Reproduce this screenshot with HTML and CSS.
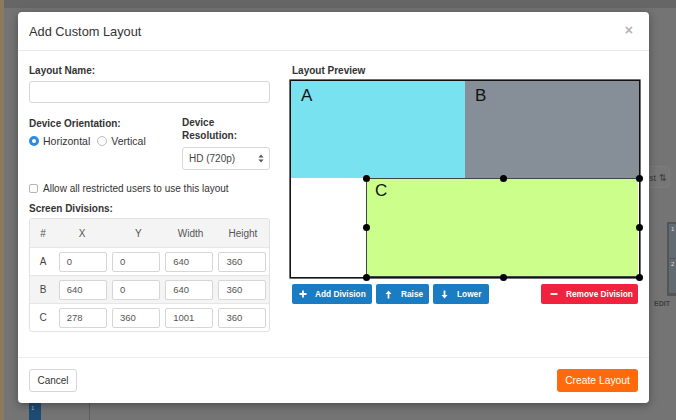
FILE: index.html
```html
<!DOCTYPE html>
<html>
<head>
<meta charset="utf-8">
<link rel="stylesheet" href="styles.css">
</head>
<body>
<div class="backdrop">
  <div class="bg-edge"></div>
  <div class="bg-sort">st <span class="sort-ic">⇅</span></div>
  <div class="bg-card"><span>1</span><span>2</span></div>
  <div class="bg-edit">EDIT</div>
  <div class="bg-tile">1</div>
  <div class="bg-bar"></div>
</div>
<div class="modal">
  <div class="modal-header">
    <h1 class="modal-title">Add Custom Layout</h1>
    <span class="close">×</span>
  </div>
  <div class="modal-body">
    <div class="col-left">
      <label class="lbl">Layout Name:</label>
      <input class="txt" type="text">
      <div class="device-row">
        <div class="orient">
          <label class="lbl">Device Orientation:</label>
          <div class="radios">
            <span class="radio on"></span><span class="rtext">Horizontal</span>
            <span class="radio"></span><span class="rtext">Vertical</span>
          </div>
        </div>
        <div class="resol">
          <label class="lbl lbl2">Device<br>Resolution:</label>
          <div class="select">HD (720p)<span class="arrows"><svg width="6" height="9" viewBox="0 0 6 9"><path d="M3 0.5 L5.5 3.5 H0.5 Z M3 8.5 L5.5 5.5 H0.5 Z" fill="#555"/></svg></span></div>
        </div>
      </div>
      <div class="check-row"><span class="check"></span>Allow all restricted users to use this layout</div>
      <label class="lbl sd">Screen Divisions:</label>
      <div class="tbl">
        <div class="tr th"><span class="c0">#</span><span class="c">X</span><span class="c">Y</span><span class="c">Width</span><span class="c">Height</span></div>
        <div class="tr"><span class="c0">A</span><span class="c"><i class="cell">0</i></span><span class="c"><i class="cell">0</i></span><span class="c"><i class="cell">640</i></span><span class="c"><i class="cell">360</i></span></div>
        <div class="tr alt"><span class="c0">B</span><span class="c"><i class="cell">640</i></span><span class="c"><i class="cell">0</i></span><span class="c"><i class="cell">640</i></span><span class="c"><i class="cell">360</i></span></div>
        <div class="tr last"><span class="c0">C</span><span class="c"><i class="cell">278</i></span><span class="c"><i class="cell">360</i></span><span class="c"><i class="cell">1001</i></span><span class="c"><i class="cell">360</i></span></div>
      </div>
    </div>
    <div class="col-right">
      <label class="lbl pl">Layout Preview</label>
      <div class="preview">
        <div class="div div-a" style="left:0;top:0;width:174px;height:97px"><span>A</span></div>
        <div class="div div-b" style="left:174px;top:0;width:174px;height:97px"><span>B</span></div>
        <div class="div div-c" style="left:75px;top:97px;width:272px;height:99px"><span>C</span></div>
        <i class="h" style="left:75px;top:97px"></i>
        <i class="h" style="left:212px;top:97px"></i>
        <i class="h" style="left:348px;top:97px"></i>
        <i class="h" style="left:75px;top:146px"></i>
        <i class="h" style="left:348px;top:146px"></i>
        <i class="h" style="left:75px;top:196px"></i>
        <i class="h" style="left:212px;top:196px"></i>
        <i class="h" style="left:348px;top:196px"></i>
      </div>
      <div class="btn-row">
        <span class="btn blue add"><svg width="8" height="8" viewBox="0 0 8 8"><path d="M4 0.5 V7.5 M0.5 4 H7.5" stroke="#fff" stroke-width="1.8"/></svg>Add Division</span>
        <span class="btn blue raise"><svg width="7" height="9" viewBox="0 0 7 9"><path d="M3.5 0.5 L6.5 4 H4.4 V8.5 H2.6 V4 H0.5 Z" fill="#fff"/></svg>Raise</span>
        <span class="btn blue lower"><svg width="7" height="9" viewBox="0 0 7 9"><path d="M3.5 8.5 L6.5 5 H4.4 V0.5 H2.6 V5 H0.5 Z" fill="#fff"/></svg>Lower</span>
        <span class="spacer"></span>
        <span class="btn red"><svg width="8" height="8" viewBox="0 0 8 8"><path d="M0.5 4 H7.5" stroke="#fff" stroke-width="1.8"/></svg>Remove Division</span>
      </div>
    </div>
  </div>
  <div class="modal-footer">
    <span class="btn-cancel">Cancel</span>
    <span class="btn-create">Create Layout</span>
  </div>
</div>
</body>
</html>
```

FILE: styles.css
```css
html, body {
  margin: 0;
  padding: 0;
}
body {
  width: 676px;
  height: 420px;
  overflow: hidden;
  background: #727272;
  font-family: "Liberation Sans", Arial, sans-serif;
  color: #333;
  position: relative;
}
.backdrop {
  position: absolute;
  inset: 0;
  background: linear-gradient(#666 0, #666 8px, #747474 8px);
}
.bg-edge {
  position: absolute;
  left: 0;
  top: 0;
  width: 4px;
  height: 420px;
  background: #8a7a5e;
}
.bg-sort {
  position: absolute;
  left: 640px;
  top: 166px;
  width: 30px;
  height: 22px;
  border: 1px solid #7c7c7c;
  border-radius: 3px;
  background: #777;
  font-size: 9px;
  line-height: 22px;
  color: #3a3a3a;
  padding-left: 8px;
  box-sizing: border-box;
}
.sort-ic { font-size: 9px; }
.bg-card {
  position: absolute;
  left: 667px;
  top: 222px;
  width: 12px;
  height: 70px;
  border: 2px solid #555;
  background: #626a72;
  font-size: 6px;
  color: #ddd;
}
.bg-card span { display: block; padding: 2px; height: 30px; border-bottom: 1px solid #555; }
.bg-edit {
  position: absolute;
  left: 654px;
  top: 300px;
  font-size: 7px;
  font-weight: bold;
  color: #3e3e3e;
}
.bg-tile {
  position: absolute;
  left: 29px;
  top: 403px;
  width: 12px;
  height: 17px;
  background: #1d4b73;
  color: #aac;
  font-size: 6px;
  padding: 2px;
  box-sizing: border-box;
}
.bg-bar {
  position: absolute;
  left: 89px;
  top: 403px;
  width: 1px;
  height: 17px;
  background: #5e5e5e;
}

.modal {
  position: absolute;
  left: 18px;
  top: 12px;
  width: 631px;
  height: 391px;
  background: #fff;
  border-radius: 4px;
  box-shadow: 0 2px 8px rgba(0,0,0,0.35);
  display: flex;
  flex-direction: column;
}
.modal-header {
  height: 39px;
  box-sizing: border-box;
  border-bottom: 1px solid #e8e8e8;
  display: flex;
  align-items: center;
  padding: 0 11px;
}
.modal-title {
  margin: 0;
  font-size: 12.8px;
  font-weight: normal;
  color: #333;
  flex: 1;
}
.close {
  color: #b5b5b5;
  font-size: 14px;
  font-weight: bold;
  margin-right: 5px;
  margin-top: -2px;
}
.modal-body {
  flex: 1;
  display: flex;
  padding: 13px 9px 0 11px;
  gap: 20px;
  border-bottom: 1px solid #ececec;
}
.col-left {
  width: 241px;
  display: flex;
  flex-direction: column;
}
.col-right {
  width: 350px;
  display: flex;
  flex-direction: column;
}
.lbl {
  font-size: 10px;
  font-weight: bold;
  line-height: 13px;
  color: #333;
  display: block;
}
.pl { padding-left: 2px; }
.txt {
  margin: 4px 0 0 0;
  width: 241px;
  height: 22px;
  box-sizing: border-box;
  border: 1px solid #d6d6d6;
  border-radius: 3px;
  padding: 0;
  outline: none;
}
.device-row {
  display: flex;
  margin-top: 10px;
}
.orient {
  width: 153px;
  padding-top: 4px;
}
.radios {
  display: flex;
  align-items: center;
  margin-top: 5px;
  font-size: 10.5px;
  color: #333;
}
.radio {
  width: 10px;
  height: 10px;
  border-radius: 50%;
  border: 1px solid #bdbdbd;
  box-sizing: border-box;
  margin-right: 4px;
}
.radio.on {
  border: 3px solid #2a8ce5;
  background: #fff;
}
.rtext { margin-right: 7px; }
.resol {
  width: 88px;
  padding-top: 3px;
}
.lbl2 { line-height: 13px; }
.select {
  margin-top: 5px;
  height: 23px;
  box-sizing: border-box;
  border: 1px solid #d8d8d8;
  border-radius: 3px;
  font-size: 10px;
  color: #444;
  display: flex;
  align-items: center;
  padding: 0 5px 0 6px;
  justify-content: space-between;
}
.arrows { display: flex; }
.check-row {
  margin-top: 13px;
  display: flex;
  align-items: center;
  font-size: 10px;
  color: #333;
}
.check {
  width: 9px;
  height: 9px;
  border: 1px solid #b5b5b5;
  border-radius: 2px;
  margin-right: 5px;
  box-sizing: border-box;
}
.sd { margin-top: 8px; }
.tbl {
  margin-top: 3px;
  border: 1px solid #e2e2e2;
  border-radius: 3px;
  overflow: hidden;
  font-size: 10px;
  color: #444;
}
.tr {
  display: flex;
  align-items: center;
  height: 27px;
  border-top: 1px solid #e6e6e6;
}
.tr.th {
  height: 28px;
  border-top: 0;
  background: #f4f4f4;
  color: #555;
}
.tr.alt { background: #f4f4f4; }
.c0 {
  width: 26px;
  text-align: center;
}
.c {
  flex: 1;
  display: flex;
  justify-content: center;
}
.tr.th .c:nth-child(2) { padding-right: 4px; }
.cell {
  font-style: normal;
  width: 48px;
  height: 20px;
  box-sizing: border-box;
  border: 1px solid #d6d6d6;
  border-radius: 2px;
  background: #fff;
  font-size: 9.5px;
  color: #555;
  line-height: 18px;
  padding-left: 7px;
}
.preview {
  margin-top: 3px;
  position: relative;
  width: 348px;
  height: 196px;
  border: 1px solid #111;
  box-shadow: 0 0 0 0.6px #111;
  background: #fff;
}
.div {
  position: absolute;
  box-sizing: border-box;
}
.div span {
  position: absolute;
  left: 10px;
  top: 5px;
  font-size: 17px;
  color: #111;
}
.div-a { background: #79e2f0; }
.div-b { background: #868e98; }
.div-b span { left: 10px; }
.div-c { background: #ccfe8c; border: 1px solid #444; border-right: 0; }
.div-c span { left: 8px; top: 2px; }
.h {
  position: absolute;
  width: 7px;
  height: 7px;
  margin: -3.5px 0 0 -3.5px;
  border-radius: 50%;
  background: #000;
}
.btn-row {
  display: flex;
  margin-top: 6px;
  gap: 4px;
  padding-left: 2px;
  padding-right: 2px;
}
.spacer { flex: 1; }
.btn {
  height: 20px;
  box-sizing: border-box;
  border-radius: 2px;
  display: flex;
  align-items: center;
  color: #fff;
  font-size: 8.3px;
  font-weight: bold;
  padding: 0 0 0 7px;
  gap: 8px;
  white-space: nowrap;
}
.btn svg { flex-shrink: 0; }
.add { width: 80px; }
.raise { width: 53px; gap: 9px; padding-left: 9px; }
.lower { width: 56px; gap: 9px; padding-left: 8px; }
.blue { background: #1a7cc2; }
.red { background: #f0233f; width: 97px; padding-left: 9px; gap: 8px; }
.modal-footer {
  height: 45px;
  display: flex;
  align-items: center;
  justify-content: space-between;
  padding: 0 11px;
}
.btn-cancel {
  width: 48px;
  height: 23px;
  box-sizing: border-box;
  border: 1px solid #d6d6d6;
  border-radius: 3px;
  font-size: 10px;
  color: #333;
  display: flex;
  align-items: center;
  justify-content: center;
}
.btn-create {
  width: 81px;
  height: 23px;
  border-radius: 3px;
  background: #ff6a0c;
  color: #fff;
  font-size: 10.3px;
  display: flex;
  align-items: center;
  justify-content: center;
}
```
